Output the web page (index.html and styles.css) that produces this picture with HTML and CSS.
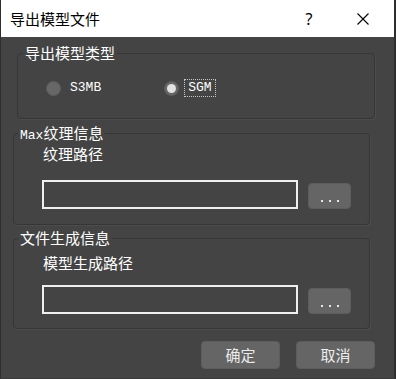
FILE: index.html
```html
<!DOCTYPE html>
<html lang="zh-CN">
<head>
    <meta charset="UTF-8">
    <meta name="viewport" content="width=device-width, initial-scale=1.0">
    <title>导出模型文件</title>
    <link rel="stylesheet" href="styles.css">
</head>
<body>
    <div class="dialog">
        <div class="titlebar">
            <span class="title">导出模型文件</span>
            <span class="help">?</span>
            <span class="close">
                <svg width="12" height="12" viewBox="0 0 12 12"><path d="M0.5 0.5 L11.5 11.5 M11.5 0.5 L0.5 11.5" stroke="#000" stroke-width="1.1" fill="none"/></svg>
            </span>
        </div>
        <div class="content">
            <fieldset class="group group-type">
                <legend>导出模型类型</legend>
                <div class="radios">
                    <div class="radio">
                        <span class="dot"></span>
                        <span class="radio-label lat">S3MB</span>
                    </div>
                    <div class="radio checked">
                        <span class="dot"></span>
                        <span class="radio-label lat">SGM</span>
                    </div>
                </div>
            </fieldset>

            <fieldset class="group group-texture">
                <legend><span class="lat">Max</span>纹理信息</legend>
                <div class="field-label">纹理路径</div>
                <div class="path-row">
                    <div class="path-input"></div>
                    <div class="browse"><i></i><i></i><i></i></div>
                </div>
            </fieldset>

            <fieldset class="group group-output">
                <legend>文件生成信息</legend>
                <div class="field-label">模型生成路径</div>
                <div class="path-row">
                    <div class="path-input"></div>
                    <div class="browse"><i></i><i></i><i></i></div>
                </div>
            </fieldset>

            <div class="actions">
                <button class="btn">确定</button>
                <button class="btn">取消</button>
            </div>
        </div>
    </div>
</body>
</html>
```

FILE: styles.css
```css
* {
    box-sizing: border-box;
}

body {
    margin: 0;
    background-color: #444;
    font-family: "Noto Sans CJK SC", "Noto Sans", sans-serif;
}

.dialog {
    width: 396px;
    height: 379px;
    background-color: #444;
    border-left: 1px solid #2e2e2e;
    border-right: 2px solid #2e2e2e;
    border-bottom: 1px solid #3a3a3a;
    display: flex;
    flex-direction: column;
}

.titlebar {
    height: 37px;
    background-color: #fff;
    display: flex;
    align-items: center;
    padding-left: 9px;
    flex-shrink: 0;
}

.title {
    font-size: 15px;
    color: #000;
    flex: 1;
}

.help {
    font-family: "Noto Sans", sans-serif;
    font-size: 16px;
    color: #000;
    width: 58px;
    text-align: center;
    margin-right: -4px;
}

.close {
    width: 58px;
    display: flex;
    justify-content: center;
    margin-right: 2px;
}

.close svg {
    display: block;
}

.content {
    flex: 1;
    color: #fff;
    font-size: 15px;
}

.lat {
    font-family: "Liberation Mono", monospace;
    font-size: 13px;
}

.group {
    margin: 0;
    border: 1px solid #363636;
    border-radius: 4px;
    box-shadow: 1px 1px 0 #4c4c4c;
    min-width: 0;
}

.group legend {
    padding: 0 2px;
    line-height: 16px;
    height: 16px;
    font-size: 15px;
}

.group-type {
    width: 358px;
    margin: 8px 0 0 16px;
    padding: 17px 0 20px 28px;
}

.group-type legend {
    margin-left: -23px;
}

.radios {
    display: flex;
    align-items: center;
    height: 20px;
    gap: 59px;
}

.radio {
    display: flex;
    align-items: center;
}

.dot {
    width: 15px;
    height: 15px;
    border-radius: 50%;
    background-color: #676767;
    border: 1px solid #5c5c5c;
    display: flex;
    justify-content: center;
    align-items: center;
}

.checked .dot::after {
    content: "";
    width: 9px;
    height: 9px;
    border-radius: 50%;
    background-color: #e2e2e2;
}

.radio-label {
    margin-left: 5px;
    padding: 0 3px;
    line-height: 16px;
    border: 1px dotted transparent;
}

.checked .radio-label {
    border-color: #c8c8c8;
}

.group-texture {
    width: 357px;
    margin: 6px 0 0 12px;
    padding: 5px 0 15px 29px;
}

.group-output {
    width: 357px;
    margin: 5px 0 0 12px;
    padding: 9px 0 14px 29px;
}

.group-texture legend,
.group-output legend {
    margin-left: -25px;
}

.field-label {
    line-height: 16px;
    height: 16px;
}

.group-texture .path-row {
    margin-top: 18px;
}

.group-output .path-row {
    margin-top: 14px;
}

.path-row {
    display: flex;
    align-items: flex-end;
    gap: 10px;
    margin-left: -1px;
}

.path-input {
    width: 256px;
    height: 29px;
    border: 2px solid #efefef;
    background-color: #444;
}

.browse {
    width: 43px;
    height: 26px;
    border-radius: 4px;
    background-color: #656565;
    border: 1px solid #5d5d5d;
    display: flex;
    justify-content: center;
    align-items: flex-end;
    gap: 6px;
    padding-bottom: 6px;
}

.browse i {
    width: 2px;
    height: 2px;
    background-color: #e6e6e6;
}

.actions {
    display: flex;
    justify-content: flex-end;
    gap: 16px;
    margin-top: 12px;
    padding-right: 19px;
}

.btn {
    width: 79px;
    height: 28px;
    border-radius: 4px;
    border: 1px solid #5d5d5d;
    background-color: #656565;
    color: #ececec;
    font-family: "Noto Sans CJK SC", sans-serif;
    font-size: 15px;
    padding: 0;
    line-height: 26px;
}
```
